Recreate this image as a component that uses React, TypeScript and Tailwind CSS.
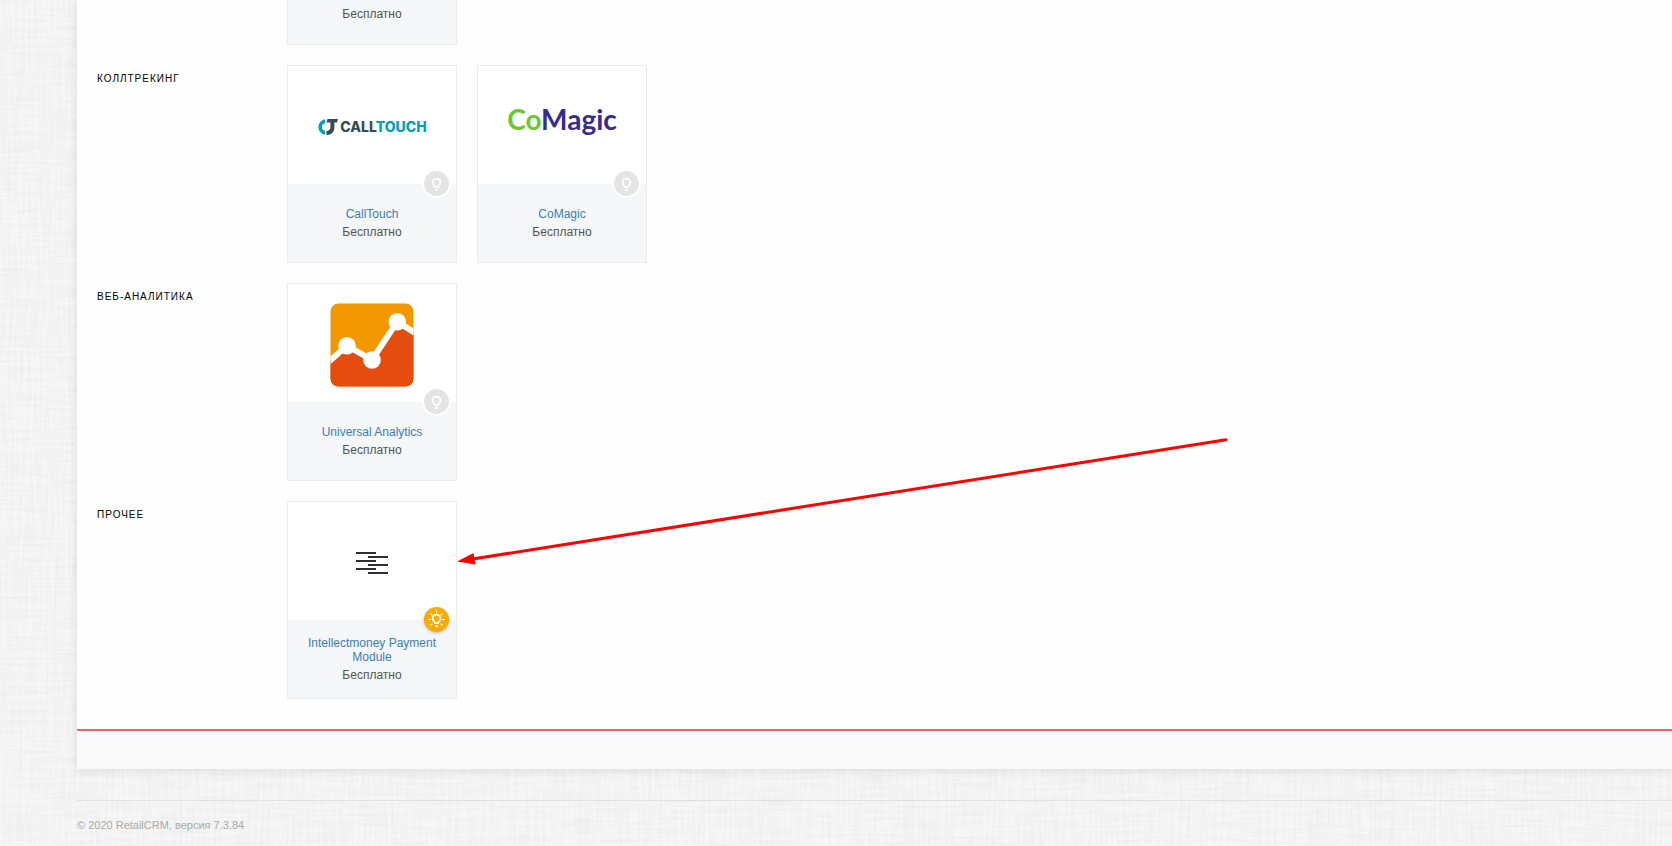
import React from 'react';
import { clsx } from 'clsx';

interface Integration {
  name: string;
  price: string;
  logo: React.ReactNode;
  active?: boolean;
}

interface Category {
  title: string;
  items: Integration[];
}

function CallTouchLogo() {
  return (
    <div className="flex items-center gap-0.5">
      <svg width="21" height="16" viewBox="0 0 21 16" aria-hidden="true">
        <path d="M8 0.2v4a3.9 3.9 0 0 0 0 7.6v4A7.9 7.9 0 0 1 8 0.2z" fill="#009fbf" />
        <path d="M10.5 0H21l-1 3.6h-2.6v4.6c0 4.6-2.8 7.6-7.9 7.8v-4c2.6-.2 3.9-1.6 3.9-4V3.6H9.5z" fill="#374b57" />
      </svg>
      <span className="font-[Inter,sans-serif] text-[14px] leading-4 font-extrabold text-[#374b57]">
        CALL<span className="text-[#009fbf]">TOUCH</span>
      </span>
    </div>
  );
}

function CoMagicLogo() {
  return (
    <span className="pb-4 font-[Lato,sans-serif] text-[28px] leading-9 font-bold text-[#352c8c]">
      <span className="text-[#6dc82e]">Co</span>Magic
    </span>
  );
}

function AnalyticsLogo() {
  return (
    <svg width="84" height="84" viewBox="0 0 84 84" aria-hidden="true">
      <defs>
        <clipPath id="analytics-tile">
          <rect x="0.5" y="0.5" width="83" height="83" rx="8" />
        </clipPath>
      </defs>
      <g clipPath="url(#analytics-tile)">
        <rect width="84" height="84" fill="#f39800" />
        <path d="M-1 58.5 17 42.7 42 57 67.3 18.7 85 30V84H-1z" fill="#e64c10" />
        <path d="M-1 58.5 17 42.7 42 57 67.3 18.7 85 30" fill="none" stroke="#fff" strokeWidth="6" />
        <circle cx="17" cy="42.7" r="8.8" fill="#fff" />
        <circle cx="42" cy="57" r="8.8" fill="#fff" />
        <circle cx="67.3" cy="18.7" r="8.8" fill="#fff" />
      </g>
    </svg>
  );
}

function IntellectmoneyLogo() {
  return (
    <svg width="32" height="22" viewBox="0 0 32 22" aria-hidden="true">
      <path d="M0 1h20M12 5h20M0 9h20M12 13h20M0 17h20M12 21h20" stroke="#2d2f36" strokeWidth="2" />
    </svg>
  );
}

function BulbBadge({ active }: { active?: boolean }) {
  return (
    <span
      className={clsx(
        'absolute -top-[13px] right-[7px] size-[25px] rounded-full',
        active ? 'bg-[#ffaa00] shadow-[0_1px_3px_rgba(0,0,0,0.25)]' : 'bg-[#e4e4e4] ring-2 ring-white'
      )}
    >
      <svg width="25" height="25" viewBox="0 0 25 25" fill="none" stroke="#fff" aria-hidden="true">
        <path d="M11 16.2c0-1.4-2.4-2.2-2.4-4.7a3.9 3.9 0 0 1 7.8 0c0 2.5-2.4 3.300-2.4 4.700z" strokeWidth="1.8" />
        <path d="M11 19h3" strokeWidth="2" />
        {active && (
          <path d="M12.5 3v2.8M4 12.5h3M18 12.5h3M6.5 6.5l1.8 1.8M18.5 6.5l-1.8 1.8M6.5 18.5l1.8-1.8M18.5 18.5l-1.8-1.8" strokeWidth="1.2" />
        )}
      </svg>
    </span>
  );
}

const categories: Category[] = [
  {
    title: 'Коллтрекинг',
    items: [
      { name: 'CallTouch', price: 'Бесплатно', logo: <CallTouchLogo /> },
      { name: 'CoMagic', price: 'Бесплатно', logo: <CoMagicLogo /> },
    ],
  },
  {
    title: 'Веб-аналитика',
    items: [{ name: 'Universal Analytics', price: 'Бесплатно', logo: <AnalyticsLogo /> }],
  },
  {
    title: 'Прочее',
    items: [{ name: 'Intellectmoney Payment Module', price: 'Бесплатно', logo: <IntellectmoneyLogo />, active: true }],
  },
];

function IntegrationCard({ item }: { item: Integration }) {
  return (
    <article className="w-[170px] border border-[#ebebeb] bg-white">
      <div className="flex h-[118px] items-center justify-center pt-1">{item.logo}</div>
      <div className="relative flex h-[78px] flex-col items-center justify-center gap-1 bg-[#f4f6f8] px-4 text-center text-xs leading-[14px]">
        <BulbBadge active={item.active} />
        <a href="#" className="text-[#3d7eb5] hover:underline">{item.name}</a>
        <p className="text-[#555]">{item.price}</p>
      </div>
    </article>
  );
}

// Woven linen texture behind the page
function LinenBackground() {
  return (
    <svg className="absolute inset-0 -z-10 size-full" aria-hidden="true">
      <filter id="weft" x="0" y="0" width="100%" height="100%">
        <feTurbulence type="fractalNoise" baseFrequency="0.02 0.35" numOctaves="3" seed="4" />
        <feColorMatrix values="0 0 0 0 0  0 0 0 0 0  0 0 0 0 0  0.05 0 0 0 -0.015" />
      </filter>
      <filter id="warp" x="0" y="0" width="100%" height="100%">
        <feTurbulence type="fractalNoise" baseFrequency="0.35 0.02" numOctaves="3" seed="9" />
        <feColorMatrix values="0 0 0 0 0  0 0 0 0 0  0 0 0 0 0  0.05 0 0 0 -0.015" />
      </filter>
      <rect width="100%" height="100%" fill="#f8f8f8" />
      <rect width="100%" height="100%" filter="url(#weft)" />
      <rect width="100%" height="100%" filter="url(#warp)" />
    </svg>
  );
}

function PointerArrow() {
  return (
    <svg className="pointer-events-none absolute top-[436px] left-[380px]" width="774" height="134" viewBox="0 0 774 134" aria-hidden="true">
      <path d="M14 123.3 769 3.7" stroke="#f00" strokeWidth="3" strokeLinecap="round" />
      <path d="M0 125.5 16.5 117l2 11.5z" fill="#f00" />
    </svg>
  );
}

export default function App() {
  return (
    <div className="relative isolate min-h-screen overflow-hidden pl-[77px] font-['Liberation_Sans',Arial,sans-serif]">
      <LinenBackground />

      <main className="relative bg-[#fefefe] shadow-[0_1px_10px_rgba(0,0,0,0.1)]">
        <div className="flex flex-col gap-5 px-5 pb-[30px]">
          <div className="flex pl-[190px]">
            <div className="flex h-[45px] w-[170px] justify-center border border-t-0 border-[#ebebeb] bg-[#f4f6f8] pt-[7px] text-xs leading-[14px] text-[#555]">
              Бесплатно
            </div>
          </div>

          {categories.map(category => (
            <section key={category.title} className="flex">
              <h2 className="w-[190px] shrink-0 pt-[7px] text-[10px] leading-[14px] tracking-[1px] text-black uppercase">
                {category.title}
              </h2>
              <div className="flex flex-wrap gap-5">
                {category.items.map(item => (
                  <IntegrationCard key={item.name} item={item} />
                ))}
              </div>
            </section>
          ))}
        </div>
        <div className="h-10 border-t-2 border-[#ec5f6b] bg-[#fafafa]" />
        <PointerArrow />
      </main>

      <footer className="mt-[31px] border-t border-[#e0e0e0] pt-[17px] text-[11px] leading-[14px] text-[#aaa]">
        © 2020 RetailCRM, версия 7.3.84
      </footer>
    </div>
  );
}
